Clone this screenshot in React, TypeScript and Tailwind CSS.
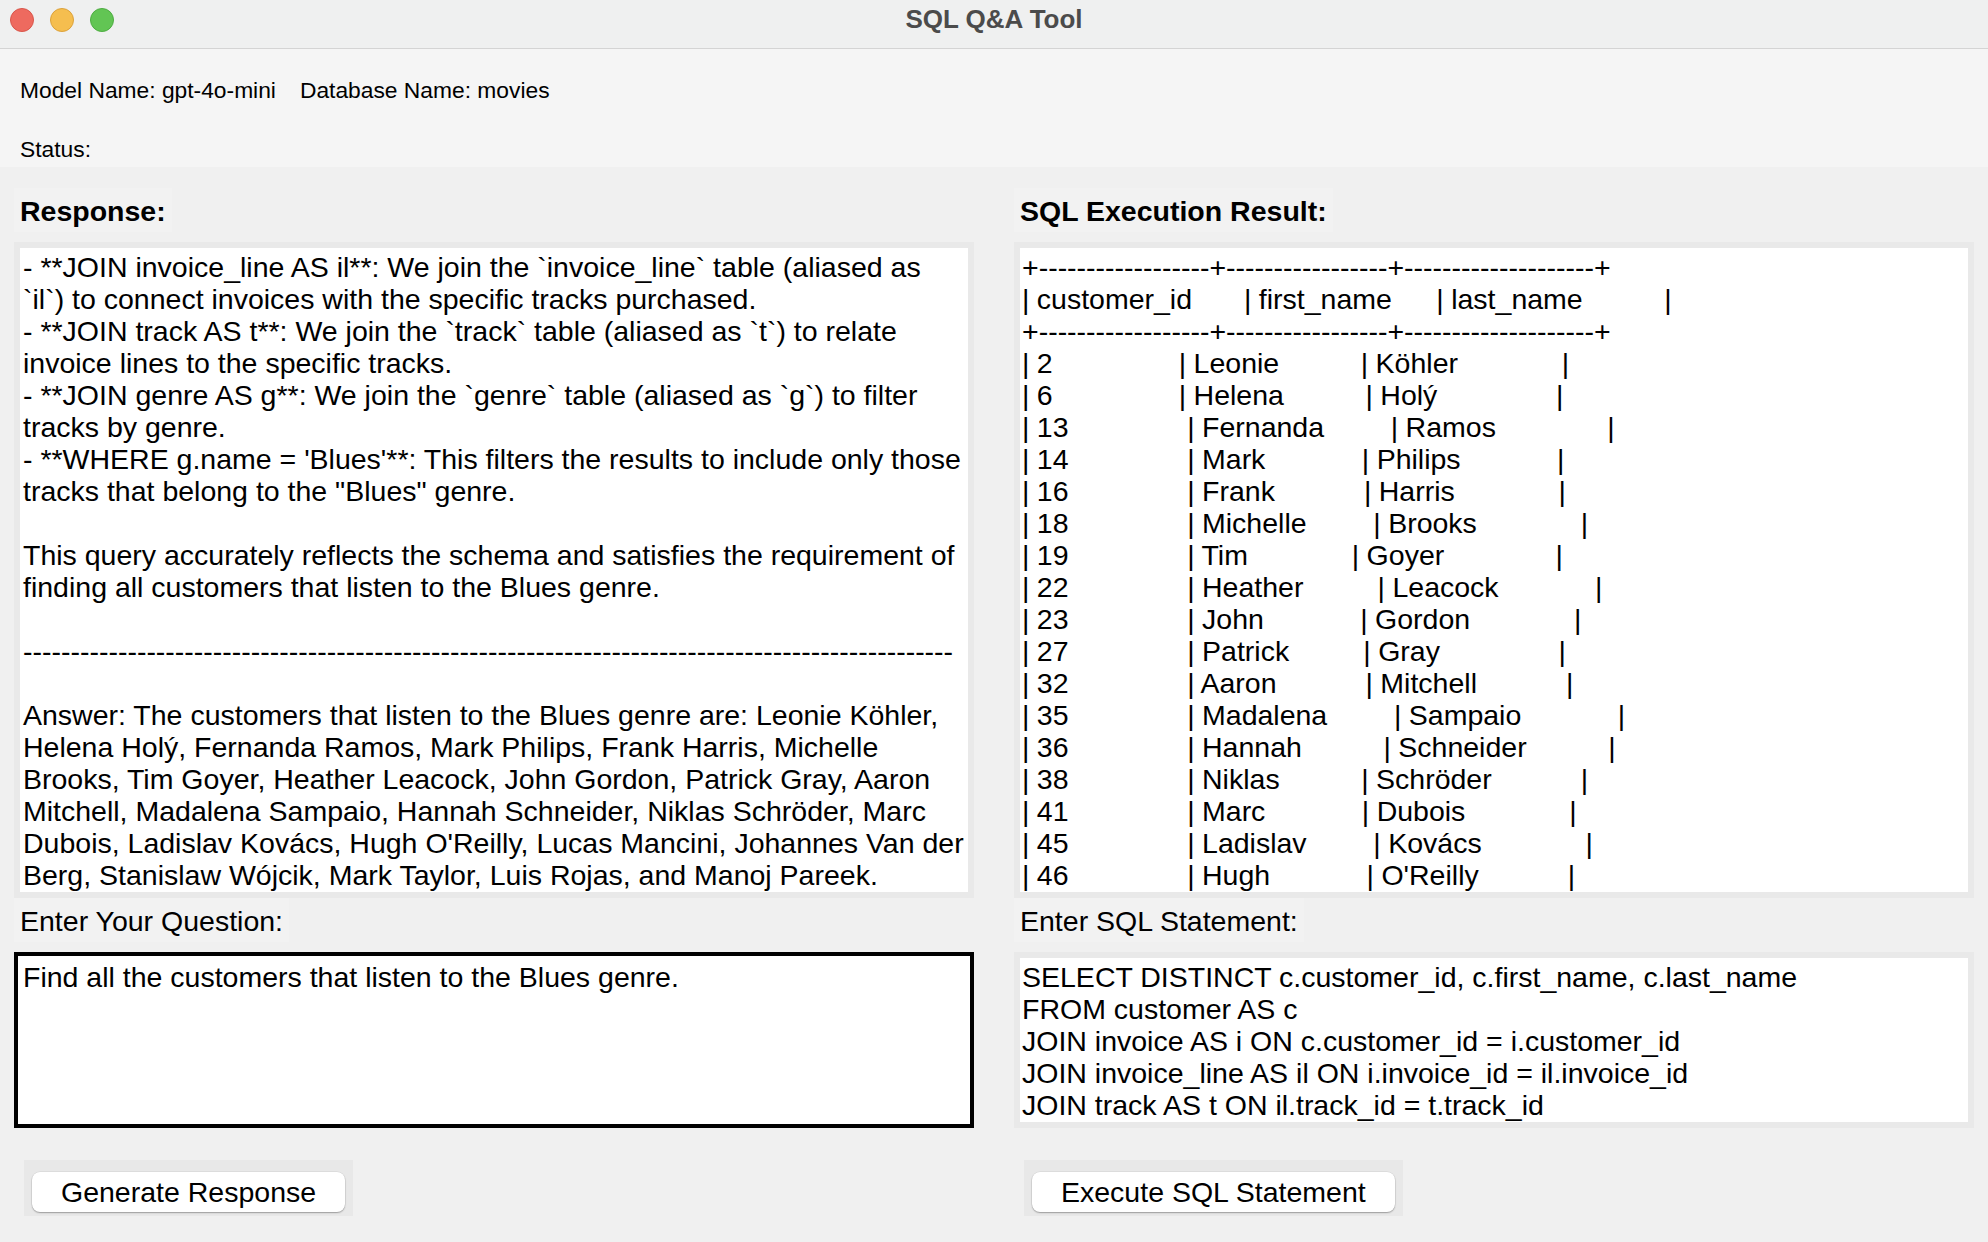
import React from 'react';

// Reply text shown in the Response pane (already wrapped the way the Tk text widget wraps it)
const responseLines = [
  '- **JOIN invoice_line AS il**: We join the `invoice_line` table (aliased as',
  '`il`) to connect invoices with the specific tracks purchased.',
  '- **JOIN track AS t**: We join the `track` table (aliased as `t`) to relate',
  'invoice lines to the specific tracks.',
  '- **JOIN genre AS g**: We join the `genre` table (aliased as `g`) to filter',
  'tracks by genre.',
  "- **WHERE g.name = 'Blues'**: This filters the results to include only those",
  'tracks that belong to the "Blues" genre.',
  '',
  'This query accurately reflects the schema and satisfies the requirement of',
  'finding all customers that listen to the Blues genre.',
  '',
  '-'.repeat(98),
  '',
  'Answer: The customers that listen to the Blues genre are: Leonie Köhler,',
  'Helena Holý, Fernanda Ramos, Mark Philips, Frank Harris, Michelle',
  'Brooks, Tim Goyer, Heather Leacock, John Gordon, Patrick Gray, Aaron',
  'Mitchell, Madalena Sampaio, Hannah Schneider, Niklas Schröder, Marc',
  "Dubois, Ladislav Kovács, Hugh O'Reilly, Lucas Mancini, Johannes Van der",
  'Berg, Stanislaw Wójcik, Mark Taylor, Luis Rojas, and Manoj Pareek.',
];

const sqlLines = [
  'SELECT DISTINCT c.customer_id, c.first_name, c.last_name',
  'FROM customer AS c',
  'JOIN invoice AS i ON c.customer_id = i.customer_id',
  'JOIN invoice_line AS il ON i.invoice_id = il.invoice_id',
  'JOIN track AS t ON il.track_id = t.track_id',
];

const rows: [string, string, string][] = [
  ['2', 'Leonie', 'Köhler'],
  ['6', 'Helena', 'Holý'],
  ['13', 'Fernanda', 'Ramos'],
  ['14', 'Mark', 'Philips'],
  ['16', 'Frank', 'Harris'],
  ['18', 'Michelle', 'Brooks'],
  ['19', 'Tim', 'Goyer'],
  ['22', 'Heather', 'Leacock'],
  ['23', 'John', 'Gordon'],
  ['27', 'Patrick', 'Gray'],
  ['32', 'Aaron', 'Mitchell'],
  ['35', 'Madalena', 'Sampaio'],
  ['36', 'Hannah', 'Schneider'],
  ['38', 'Niklas', 'Schröder'],
  ['41', 'Marc', 'Dubois'],
  ['45', 'Ladislav', 'Kovács'],
  ['46', 'Hugh', "O'Reilly"],
];

// plain-text table, padded by character count like the python output
const cell = (s: string, n: number) => '| ' + s + ' '.repeat(Math.max(0, n - 1 - s.length));
const tableRow = (c: string[], w: number[]) => c.map((s, i) => cell(s, w[i])).join('') + '|';
const border = '+' + '-'.repeat(18) + '+' + '-'.repeat(17) + '+' + '-'.repeat(20) + '+';

const resultLines = [
  border,
  tableRow(['customer_id', 'first_name', 'last_name'], [19, 17, 21]),
  border,
  ...rows.map((r) => tableRow(r, [19, 18, 21])),
];

const Lines: React.FC<{ lines: string[] }> = ({ lines }) => (
  <>
    {lines.map((l, i) => (
      <div key={i} className="h-[32px] leading-[32px] whitespace-pre">
        {l || '\u00a0'}
      </div>
    ))}
  </>
);

const Label: React.FC<{ text: string; bold?: boolean }> = ({ text, bold }) => (
  <div className={`w-fit h-[44px] leading-[41px] pt-[3px] px-[6px] bg-[#f2f2f2] ${bold ? 'font-bold' : ''}`}>
    {text}
  </div>
);

const TkButton: React.FC<{ text: string }> = ({ text }) => (
  <div className="ml-[10px] mt-[32px] w-fit bg-[#e8e8e8] px-[8px] pt-[12px] pb-[4px]">
    <div className="h-[40px] leading-[40px] px-[29px] rounded-[8px] bg-white shadow-[0_1px_1.5px_rgba(0,0,0,0.3),0_0_0_0.5px_rgba(0,0,0,0.08)]">
      {text}
    </div>
  </div>
);

export default function App() {
  return (
    <div className="w-[1988px] h-[1242px] overflow-hidden bg-[#f0f0f0] text-black font-['Liberation_Sans',Arial,sans-serif] text-[28.5px]">
      {/* window title bar */}
      <div className="relative h-[49px] bg-[#eff0f0] border-b border-[#d4d4d4] flex items-center justify-center">
        <div className="absolute left-[10px] top-[8px] flex gap-[16px]">
          <span className="w-[24px] h-[24px] rounded-full bg-[#ee6a5f] border border-[#d9564b]" />
          <span className="w-[24px] h-[24px] rounded-full bg-[#f5be4f] border border-[#dca23b]" />
          <span className="w-[24px] h-[24px] rounded-full bg-[#62c554] border border-[#4ead42]" />
        </div>
        <div className="text-[26px] font-bold text-[#4b4b4b] -mt-[9px]">SQL Q&amp;A Tool</div>
      </div>

      {/* info bar */}
      <div className="h-[118px] bg-[#f5f5f5] pl-[20px] pt-[27px] text-[22.8px] leading-[28px]">
        <div className="flex gap-[24px]">
          <span>Model Name: gpt-4o-mini</span>
          <span>Database Name: movies</span>
        </div>
        <div className="mt-[31px]">Status:</div>
      </div>

      <div className="flex gap-[40px] pl-[14px] pt-[21px]">
        {/* left column */}
        <div className="w-[960px] flex flex-col">
          <Label text="Response:" bold />
          <div className="mt-[10px] h-[656px] bg-[#e9e9e9] p-[6px]">
            <div className="h-full bg-white overflow-hidden pt-[3px] pl-[3px]">
              <Lines lines={responseLines} />
            </div>
          </div>
          <Label text="Enter Your Question:" />
          <div className="mt-[10px] h-[176px] border-[4px] border-black bg-white px-[5px] pt-[5px]">
            <Lines lines={['Find all the customers that listen to the Blues genre.']} />
          </div>
          <TkButton text="Generate Response" />
        </div>

        {/* right column */}
        <div className="w-[960px] flex flex-col">
          <Label text="SQL Execution Result:" bold />
          <div className="mt-[10px] h-[656px] bg-[#e9e9e9] p-[6px]">
            <div className="h-full bg-white overflow-hidden pt-[3px] pl-[2px] [word-spacing:-0.5px]">
              <Lines lines={resultLines} />
            </div>
          </div>
          <Label text="Enter SQL Statement:" />
          <div className="mt-[10px] h-[176px] bg-[#e9e9e9] p-[6px]">
            <div className="h-full bg-white overflow-hidden pt-[3px] pl-[2px]">
              <Lines lines={sqlLines} />
            </div>
          </div>
          <TkButton text="Execute SQL Statement" />
        </div>
      </div>
    </div>
  );
}
